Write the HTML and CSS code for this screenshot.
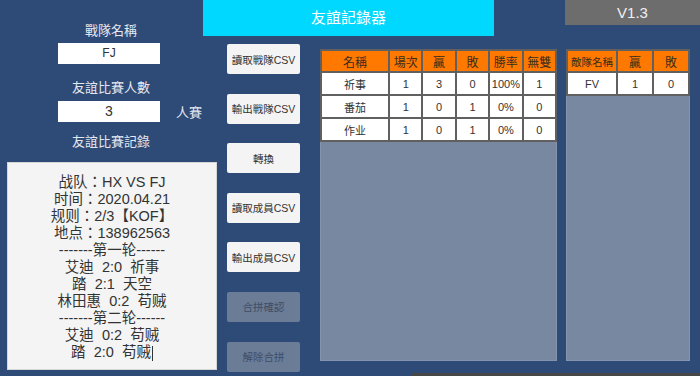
FILE: index.html
```html
<!DOCTYPE html>
<html lang="zh-Hant">
<head>
  <meta charset="UTF-8">
  <title>友誼記錄器</title>
  <link rel="stylesheet" href="styles.css">
</head>
<body>
  <div class="app">
    <div class="side">
      <div class="label">戰隊名稱</div>
      <div class="field">FJ</div>

      <div class="label second">友誼比賽人數</div>
      <div class="count-row">
        <div class="field count">3</div>
        <span class="unit">人賽</span>
      </div>

      <div class="label third">友誼比賽記錄</div>
      <div class="record">
        <div>战队：HX VS FJ</div>
        <div>时间：2020.04.21</div>
        <div>规则：2/3【KOF】</div>
        <div>地点：138962563</div>
        <div>-------第一轮------</div>
        <div>艾迪  2:0  祈事</div>
        <div>踏  2:1  天空</div>
        <div>林田惠  0:2  苟贼</div>
        <div>-------第二轮------</div>
        <div>艾迪  0:2  苟贼</div>
        <div>踏  2:0  苟贼<span class="caret"></span></div>
      </div>
    </div>

    <div class="board">
      <div class="topbar">
        <div class="title">友誼記錄器</div>
        <div class="version">V1.3</div>
      </div>

      <div class="main">
        <div class="buttons">
          <div class="btn">讀取戰隊CSV</div>
          <div class="btn">輸出戰隊CSV</div>
          <div class="btn">轉換</div>
          <div class="btn">讀取成員CSV</div>
          <div class="btn">輸出成員CSV</div>
          <div class="btn off">合拼確認</div>
          <div class="btn off">解除合拼</div>
        </div>

        <div class="panel members">
          <table class="grid">
            <tr>
              <th class="name">名稱</th>
              <th>場次</th>
              <th>贏</th>
              <th>敗</th>
              <th>勝率</th>
              <th>無雙</th>
            </tr>
            <tr><td>祈事</td><td>1</td><td>3</td><td>0</td><td>100%</td><td>1</td></tr>
            <tr><td>番茄</td><td>1</td><td>0</td><td>1</td><td>0%</td><td>0</td></tr>
            <tr><td>作业</td><td>1</td><td>0</td><td>1</td><td>0%</td><td>0</td></tr>
          </table>
        </div>

        <div class="panel enemies">
          <table class="grid">
            <tr>
              <th class="enemy-name">敵隊名稱</th>
              <th>贏</th>
              <th>敗</th>
            </tr>
            <tr><td>FV</td><td>1</td><td>0</td></tr>
          </table>
        </div>
      </div>

      <div class="strip"></div>
    </div>
  </div>
</body>
</html>
```

FILE: styles.css
```css
body {
  margin: 0;
  width: 700px;
  height: 376px;
  overflow: hidden;
  background: #2e4a76;
  font-family: "Liberation Sans", "Noto Sans CJK TC", sans-serif;
}

.app {
  display: flex;
}

/* left column */
.side {
  width: 217px;
  padding-top: 22px;
}

.label {
  margin-left: 58px;
  width: 106px;
  text-align: center;
  font-size: 13px;
  line-height: 18px;
  color: #e4e8f0;
  white-space: nowrap;
}
.label.second {
  margin-top: 15px;
}
.label.third {
  margin-top: 11px;
}

.field {
  margin: 3px 0 0 58px;
  width: 102px;
  height: 21px;
  line-height: 21px;
  background: #fff;
  text-align: center;
  font-size: 12px;
  color: #333;
}

.count-row {
  display: flex;
  align-items: center;
  margin: 4px 0 0 58px;
}
.field.count {
  margin: 0;
  font-size: 14px;
}
.unit {
  margin-left: 16px;
  font-size: 13px;
  color: #e4e8f0;
}

.record {
  margin: 11px 0 0 7px;
  width: 210px;
  height: 208px;
  box-sizing: border-box;
  padding-top: 11px;
  background: #f4f4f4;
  border: 1px solid #d6d6d6;
  text-align: center;
  font-size: 14.5px;
  line-height: 17px;
  color: #333;
}
.record div {
  white-space: pre;
}
.caret {
  display: inline-block;
  width: 1px;
  height: 15px;
  margin-left: 1px;
  background: #333;
  vertical-align: middle;
}

/* right side */
.board {
  flex: 1;
}

.topbar {
  display: flex;
  justify-content: space-between;
  align-items: flex-start;
}
.title {
  margin-left: -14px;
  width: 291px;
  height: 36px;
  line-height: 36px;
  background: #00d8ff;
  color: #fff;
  font-size: 15px;
  text-align: center;
}
.version {
  width: 135px;
  height: 25px;
  line-height: 25px;
  background: #6d6d6d;
  color: #f0f0f0;
  font-size: 15px;
  text-align: center;
}

.main {
  display: flex;
  align-items: flex-start;
  margin-top: 8px;
}

.buttons {
  display: flex;
  flex-direction: column;
  gap: 19.6px;
  margin-left: 10px;
  width: 73px;
}
.btn {
  height: 30px;
  display: flex;
  align-items: center;
  justify-content: center;
  background: #f4f4f4;
  border-radius: 2px;
  font-size: 10.5px;
  color: #333;
  white-space: nowrap;
}
.btn.off {
  background: #6b7c97;
  color: #3e4d66;
}

.panel {
  margin-top: 5px;
  height: 312px;
  box-sizing: border-box;
  background: #7888a1;
  border: 1px solid #8494ac;
  border-top: 0;
}
.members {
  margin-left: 20px;
  width: 237px;
}
.enemies {
  margin-left: 9px;
  width: 124px;
}

.grid {
  width: calc(100% + 2px);
  margin-left: -1px;
  table-layout: fixed;
  border-collapse: separate;
  border-spacing: 2px;
  background: #606060;
}
.grid th {
  height: 20px;
  padding: 0;
  background: #ff7800;
  font-weight: normal;
  font-size: 12px;
  color: #3a2c1c;
  white-space: nowrap;
}
.grid td {
  height: 21px;
  padding: 0;
  background: #fff;
  text-align: center;
  font-size: 11px;
  color: #333;
}
.grid .name {
  width: 66px;
}
.grid .enemy-name {
  width: 48px;
  font-size: 10.5px;
}

.strip {
  margin: 1px 0 0 195px;
  height: 3px;
  background: #474747;
}
```
